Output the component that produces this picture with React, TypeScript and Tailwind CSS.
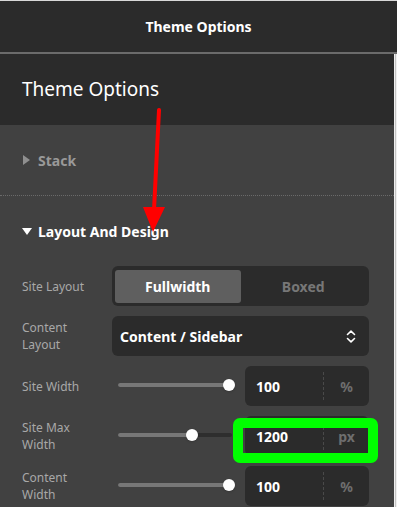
import type { ReactNode } from 'react';

const FONT = '"Noto Sans", "Open Sans", "Liberation Sans", sans-serif';

function Row({ label, children }: { label: ReactNode; children: ReactNode }) {
  return (
    <div className="flex h-[40px] items-center">
      <div className="w-[90px] shrink-0 text-[12px] leading-[17px] text-[#a8a8a8]">{label}</div>
      <div className="flex-1 min-w-0 h-full">{children}</div>
    </div>
  );
}

function Slider({ pct }: { pct: number }) {
  return (
    <div className="relative h-full w-[114px] ml-[6px]">
      <div className="absolute left-0 right-0 top-[17px] h-[4px] rounded-full bg-[#2e2e2e]" />
      <div className="absolute left-0 top-[17px] h-[4px] rounded-full bg-[#777]" style={{ width: `${pct}%` }} />
      <div
        className="absolute top-[13px] h-[12px] w-[12px] -ml-[6px] rounded-full bg-white shadow"
        style={{ left: `${pct}%` }}
      />
    </div>
  );
}

function NumberInput({ value, unit }: { value: string; unit: string }) {
  return (
    <div className="flex h-[40px] w-[124px] rounded-md bg-[#2b2b2b]">
      <div className="flex-1 flex items-center pl-[11px] text-[14px] font-bold text-white">{value}</div>
      <div className="my-[6px] border-l border-dashed border-[#4a4a4a]" />
      <div className="w-[45px] flex items-center justify-center text-[14px] font-bold text-[#6e6e6e]">{unit}</div>
    </div>
  );
}

function SliderRow({ label, pct, value, unit, highlight }: { label: ReactNode; pct: number; value: string; unit: string; highlight?: boolean }) {
  return (
    <Row label={label}>
      <div className="flex h-full items-center">
        <Slider pct={pct} />
        <div className="relative ml-[13px]">
          <NumberInput value={value} unit={unit} />
          {highlight && (
            <div className="absolute left-[-12px] top-[2px] right-[-9px] bottom-[-7px] rounded-[7px] border-[10px] border-[#00ff00]" />
          )}
        </div>
      </div>
    </Row>
  );
}

export default function App() {
  return (
    <div className="relative flex flex-col w-[397px] h-[507px] overflow-hidden bg-[#2b2b2b]" style={{ fontFamily: FONT }}>
      <div className="h-[1px] bg-[#d9d9d9]" />
      <div className="h-[51px] flex items-center justify-center text-[14px] font-bold text-white">Theme Options</div>
      <div className="h-[2px] bg-[#6b6b6b]" />

      <div className="flex flex-1 min-h-0">
        <div className="flex-1 min-w-0 flex flex-col">
          <div className="h-[71px] shrink-0 flex items-center px-[22px] text-[19px] text-white">Theme Options</div>

          <div className="flex-1 bg-[#414141]">
            <div className="h-[71px] flex items-center gap-[8px] px-[23px] border-b border-dotted border-[#6a6a6a]">
              <svg width="7" height="10" viewBox="0 0 7 10"><path d="M0 0 L7 5 L0 10 Z" fill="#8f8f8f" /></svg>
              <span className="text-[14px] font-bold text-[#999]">Stack</span>
            </div>

            <div className="pt-[25px] pr-[25px] pl-[22px]">
              <div className="flex items-center gap-[6px] h-[20px]">
                <svg width="10" height="7" viewBox="0 0 10 7"><path d="M0 0 L10 0 L5 7 Z" fill="#fff" /></svg>
                <span className="text-[14px] font-bold text-white">Layout And Design</span>
              </div>

              <div className="mt-[25px] flex flex-col gap-[10px]">
                <Row label="Site Layout">
                  <div className="grid grid-cols-2 h-full rounded-md bg-[#2b2b2b] pt-[4px] pb-[3px] px-[3px]">
                    <div className="flex items-center justify-center rounded-[3px] bg-[#5f5f5f] text-[14px] font-bold text-white">Fullwidth</div>
                    <div className="flex items-center justify-center text-[14px] font-bold text-[#777]">Boxed</div>
                  </div>
                </Row>

                <Row label={<>Content<br />Layout</>}>
                  <div className="flex h-full items-center justify-between rounded-md bg-[#2b2b2b] pl-[8px] pr-[13px]">
                    <span className="text-[14px] font-bold text-white">Content / Sidebar</span>
                    <svg width="10" height="13" viewBox="0 0 10 13" fill="none" stroke="#fff" strokeWidth="1.6" strokeLinecap="round" strokeLinejoin="round">
                      <path d="M1.5 4.5 L5 1.2 L8.5 4.5" />
                      <path d="M1.5 8.5 L5 11.8 L8.5 8.5" />
                    </svg>
                  </div>
                </Row>

                <SliderRow label="Site Width" pct={97} value="100" unit="%" />
                <SliderRow label={<>Site Max<br />Width</>} pct={65} value="1200" unit="px" highlight />
                <SliderRow label={<>Content<br />Width</>} pct={97} value="100" unit="%" />
              </div>
            </div>
          </div>
        </div>

        <div className="w-[3px] flex">
          <div className="w-[1px] bg-[#f0f0f0]" />
          <div className="w-[1px] bg-[#c4c4c4]" />
          <div className="w-[1px] bg-[#f0f0f0]" />
        </div>
      </div>

      <svg className="absolute inset-0 pointer-events-none" width="397" height="507">
        <path d="M159 110 L154 210" stroke="#ff0000" strokeWidth="4" strokeLinecap="round" />
        <path d="M143 207 L165 207 L153 232 Z" fill="#ff0000" />
      </svg>
    </div>
  );
}
